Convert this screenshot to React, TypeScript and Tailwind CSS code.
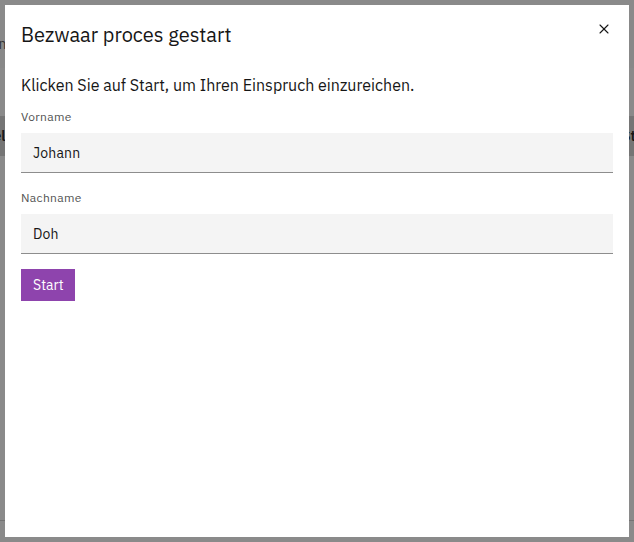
import { X } from "lucide-react";

const font = { fontFamily: '"IBM Plex Sans", Roboto, "Noto Sans", sans-serif' };

const Field = ({ label, value }: { label: string; value: string }) => (
  <div>
    <label className="block text-xs leading-4 tracking-[0.32px] text-[#525252] mb-2">{label}</label>
    <input
      readOnly
      value={value}
      className="block w-full h-10 bg-[#f4f4f4] border-0 border-b border-[#8d8d8d] px-3 text-sm tracking-[0.16px] text-[#161616] outline-none"
    />
  </div>
);

export default function App() {
  return (
    <div className="relative h-[542px] w-[634px] overflow-hidden bg-white" style={font}>
      {/* page behind the modal */}
      <div className="pt-5">
        <div className="h-12 bg-[#fafafa] flex items-center -ml-[40px]">
          <span className="text-sm text-[#525252]">Zoeken</span>
        </div>
        <div className="mt-12 h-10 bg-[#d4d4d4] flex items-center justify-between -mx-[30px]">
          <span className="text-sm font-semibold text-[#161616]">Label</span>
          <span className="text-sm font-semibold text-[#161616]">Status</span>
        </div>
        <div className="mt-[364px] border-b border-[#d0d0d0]" />
      </div>

      {/* overlay */}
      <div className="absolute inset-0 bg-[#161616]/50 p-[5px]">
        <div className="relative h-[532px] w-[624px] bg-white px-4 pt-4">
          <button className="absolute right-[15px] top-[14px] h-[20px] w-[20px] flex items-center justify-center text-[#161616]">
            <X size={16} strokeWidth={1.6} />
          </button>
          <h2 className="text-xl leading-7 text-[#161616]">Bezwaar proces gestart</h2>
          <p className="mt-6 text-base leading-6 text-[#161616]">
            Klicken Sie auf Start, um Ihren Einspruch einzureichen.
          </p>
          <div className="mt-3">
            <Field label="Vorname" value="Johann" />
          </div>
          <div className="mt-[17px]">
            <Field label="Nachname" value="Doh" />
          </div>
          <button className="mt-[15px] h-8 w-[54px] bg-[#8e44ad] pl-3 text-left text-sm text-white">
            Start
          </button>
        </div>
      </div>
    </div>
  );
}
